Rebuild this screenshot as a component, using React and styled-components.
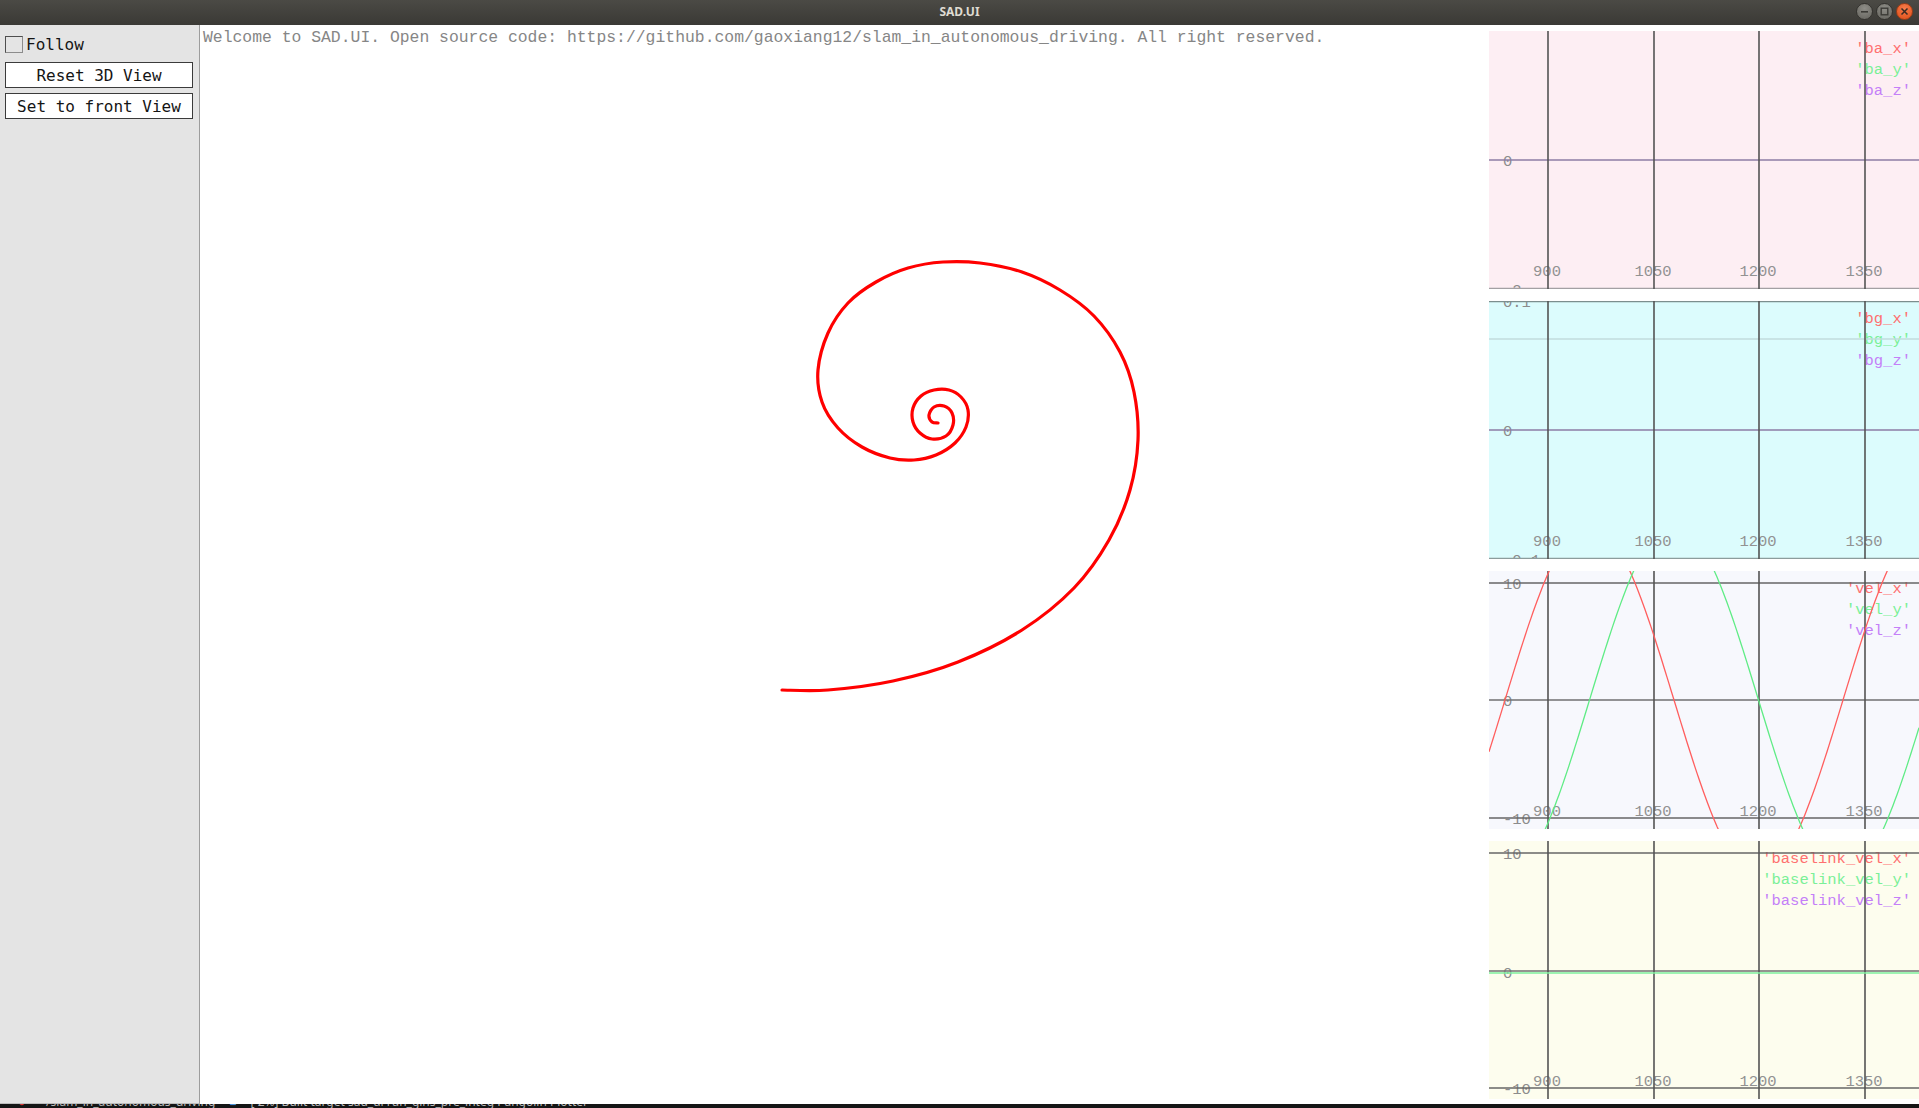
import styled, { createGlobalStyle } from "styled-components";

const MONO = `"DejaVu Sans Mono", "Liberation Mono", monospace`;
const THIN_MONO = `"Liberation Mono", "DejaVu Sans Mono", monospace`;

const GlobalStyle = createGlobalStyle`
  html, body {
    margin: 0;
    padding: 0;
    background: #161616;
    overflow: hidden;
  }
`;

const Window = styled.div`
  width: 1919px;
  height: 1108px;
  display: flex;
  flex-direction: column;
  overflow: hidden;
`;

const TitleBar = styled.div`
  flex: none;
  height: 25px;
  box-sizing: border-box;
  padding-bottom: 3px;
  display: grid;
  grid-template-columns: 1fr auto 1fr;
  align-items: center;
  background: linear-gradient(#4b4a45, #3a3935);
`;

const Title = styled.div`
  grid-column: 2;
  font-family: "Noto Sans", "DejaVu Sans", sans-serif;
  font-size: 12px;
  font-weight: 700;
  color: #dfdbd2;
`;

const WinButtons = styled.div`
  grid-column: 3;
  justify-self: end;
  display: flex;
  gap: 3px;
  padding-right: 6px;
`;

const WinButton = styled.div`
  width: 17px;
  height: 17px;
  box-sizing: border-box;
  border-radius: 50%;
  display: flex;
  align-items: center;
  justify-content: center;
  border: 1px solid ${(p) => (p.$close ? "#9c3d17" : "#34332f")};
  background: ${(p) =>
    p.$close
      ? "radial-gradient(circle at 50% 30%, #f57c4b, #e04d17)"
      : "radial-gradient(circle at 50% 30%, #8e8d87, #64635d)"};
`;

const Body = styled.div`
  flex: none;
  height: 1079px;
  display: flex;
`;

const Sidebar = styled.div`
  width: 200px;
  flex: none;
  box-sizing: border-box;
  background: #e4e4e4;
  border-right: 1px solid #9d9d9d;
  border-bottom: 1px solid #bdbdbd;
  padding: 10px 0 0 5px;
  display: flex;
  flex-direction: column;
  align-items: flex-start;
  font-family: ${MONO};
  font-size: 16px;
  color: #141414;
`;

const CheckRow = styled.label`
  height: 17px;
  display: flex;
  align-items: center;
  gap: 3px;
  line-height: 17px;
  padding-top: 1px;
`;

const CheckBox = styled.span`
  width: 18px;
  height: 17px;
  box-sizing: border-box;
  border: 1px solid #4e4e4e;
  border-right-color: #8c8c8c;
  border-bottom-color: #8c8c8c;
`;

const PanelButton = styled.div`
  margin-top: ${(p) => p.$gap}px;
  width: 188px;
  height: 26px;
  box-sizing: border-box;
  border: 1px solid #3b3b3b;
  background: #fff;
  display: flex;
  align-items: center;
  justify-content: center;
  padding-top: 1px;
  white-space: nowrap;
`;

const View = styled.div`
  flex: 1;
  position: relative;
  background: #fff;
  overflow: hidden;
`;

const Welcome = styled.div`
  position: absolute;
  top: 3px;
  left: 3px;
  font-family: ${THIN_MONO};
  font-size: 16.4px;
  line-height: 19px;
  color: #868686;
  white-space: nowrap;
`;

const Canvas = styled.svg`
  display: block;
  width: 100%;
  height: 100%;
`;

const PlotColumn = styled.div`
  width: 430px;
  flex: none;
  background: #fff;
  padding-top: 6px;
  display: flex;
  flex-direction: column;
  gap: 12px;
`;

const PlotSvg = styled.svg`
  display: block;
  width: 430px;
  height: 258px;
  flex: none;
  background: ${(p) => p.$bg};
  font-family: ${THIN_MONO};
  font-size: 15.5px;
`;

const Taskbar = styled.div`
  flex: none;
  height: 4px;
  overflow: hidden;
  background: #151515;
  display: flex;
  gap: 14px;
  padding-left: 18px;
  font-family: "Noto Sans", sans-serif;
  font-size: 12px;
  line-height: 12px;
`;

const TaskItem = styled.span`
  margin-top: -8px;
  color: ${(p) => p.$color || "#b8b8b8"};
  white-space: nowrap;
`;

// spiral trajectory traced from the reference, page coordinates (outer end -> centre)
const SPIRAL = [
  [782, 690], [828, 690], [893, 681], [958, 662], [1022, 630], [1074, 588],
  [1109, 540], [1130, 490], [1138, 440], [1134, 392], [1120, 352], [1094, 316],
  [1060, 290], [1022, 272], [980, 263], [943, 262], [908, 268], [876, 282],
  [848, 303], [828, 333], [818, 370], [822, 402], [838, 428], [862, 447],
  [890, 458], [914, 460], [936, 455], [955, 443], [966, 427], [968, 410],
  [961, 397], [949, 390], [934, 390], [921, 396], [913, 408], [913, 422],
  [920, 433], [932, 439], [946, 436], [953, 425], [952, 413], [944, 406],
  [934, 407], [929, 415], [932, 422], [938, 423],
];

const smoothPath = (pts) => {
  const f = (n) => n.toFixed(1);
  let d = `M${pts[0][0]},${pts[0][1]}`;
  for (let i = 0; i < pts.length - 1; i++) {
    const p0 = pts[i - 1] || pts[i];
    const p1 = pts[i];
    const p2 = pts[i + 1];
    const p3 = pts[i + 2] || p2;
    const c1x = p1[0] + (p2[0] - p0[0]) / 6;
    const c1y = p1[1] + (p2[1] - p0[1]) / 6;
    const c2x = p2[0] - (p3[0] - p1[0]) / 6;
    const c2y = p2[1] - (p3[1] - p1[1]) / 6;
    d += ` C${f(c1x)},${f(c1y)} ${f(c2x)},${f(c2y)} ${p2[0]},${p2[1]}`;
  }
  return d;
};

const wavePath = (fn, zero, scale) => {
  let d = "";
  for (let x = 0; x <= 430; x += 2) {
    const y = zero - scale * fn(1489 + x);
    d += `${x === 0 ? "M" : "L"}${x},${y.toFixed(1)} `;
  }
  return d;
};

const omega = (px) => (2 * Math.PI * (px - 1505)) / 338;

const X_TICKS = [
  { x: 59, label: "900" },
  { x: 165, label: "1050" },
  { x: 270, label: "1200" },
  { x: 376, label: "1350" },
];

const LEGEND_COLORS = ["#ff7070", "#7af097", "#c47ff8"];

const PLOTS = [
  {
    bg: "#fdeef3",
    legends: ["'ba_x'", "'ba_y'", "'ba_z'"],
    hlines: [
      { y: 129, color: "#8d7ca4" },
      { y: 257.5, color: "#a3a0a3" },
    ],
    ylabels: [
      { y: 129, t: "0" },
      { y: 258, t: "-2" },
    ],
    series: [],
  },
  {
    bg: "#dcfcfd",
    legends: ["'bg_x'", "'bg_y'", "'bg_z'"],
    hlines: [
      { y: 0.5, color: "#7c8e8e" },
      { y: 38, color: "#c2dcdc" },
      { y: 129, color: "#8d7ca4" },
      { y: 257.5, color: "#8c9c9c" },
    ],
    ylabels: [
      { y: 0, t: "0.1" },
      { y: 129, t: "0" },
      { y: 258, t: "-0.1" },
    ],
    series: [],
  },
  {
    bg: "#f7f8fd",
    legends: ["'vel_x'", "'vel_y'", "'vel_z'"],
    hlines: [
      { y: 12, color: "#666" },
      { y: 129, color: "#707070" },
      { y: 247, color: "#666" },
    ],
    ylabels: [
      { y: 12, t: "10" },
      { y: 129, t: "0" },
      { y: 247, t: "-10" },
    ],
    series: [
      { color: "#ff5e5e", d: wavePath((px) => 15 * Math.sin(omega(px)), 129, 11.75) },
      { color: "#5fec85", d: wavePath((px) => -15 * Math.cos(omega(px)), 129, 11.75) },
    ],
  },
  {
    bg: "#fdfdee",
    legends: ["'baselink_vel_x'", "'baselink_vel_y'", "'baselink_vel_z'"],
    hlines: [
      { y: 12, color: "#666" },
      { y: 130, color: "#707070" },
      { y: 247, color: "#666" },
    ],
    ylabels: [
      { y: 12, t: "10" },
      { y: 131, t: "0" },
      { y: 247, t: "-10" },
    ],
    series: [{ color: "#7cef9c", d: "M0,132 L430,132" }],
  },
];

const Plot = ({ bg, legends, hlines, ylabels, series }) => (
  <PlotSvg $bg={bg} viewBox="0 0 430 258">
    {ylabels.map((l) => (
      <text key={l.t} x="14" y={l.y + 5.5} fill="#8c8c8c">
        {l.t}
      </text>
    ))}
    {X_TICKS.map((t) => (
      <text key={t.label} x={t.x - 1} y="244.5" fill="#929292" textAnchor="middle">
        {t.label}
      </text>
    ))}
    {legends.map((t, i) => (
      <text key={t} x="422" y={22 + i * 21} fill={LEGEND_COLORS[i]} textAnchor="end">
        {t}
      </text>
    ))}
    {hlines.map((h) => (
      <line key={h.y} x1="0" x2="430" y1={h.y} y2={h.y} stroke={h.color} strokeWidth="1.4" />
    ))}
    {X_TICKS.map((t) => (
      <line key={t.x} x1={t.x} x2={t.x} y1="0" y2="258" stroke="#535353" strokeWidth="1.6" />
    ))}
    {series.map((s) => (
      <path key={s.color} d={s.d} fill="none" stroke={s.color} strokeWidth="1.3" />
    ))}
  </PlotSvg>
);

const App = () => {
  return (
    <Window>
      <GlobalStyle />
      <TitleBar>
        <Title>SAD.UI</Title>
        <WinButtons>
          <WinButton>
            <svg width="9" height="9" viewBox="0 0 9 9">
              <rect x="1" y="4" width="7" height="1.6" fill="#3b3a36" />
            </svg>
          </WinButton>
          <WinButton>
            <svg width="9" height="9" viewBox="0 0 9 9">
              <rect x="1.2" y="1.2" width="6.6" height="6.6" fill="none" stroke="#3b3a36" strokeWidth="1.4" />
            </svg>
          </WinButton>
          <WinButton $close>
            <svg width="9" height="9" viewBox="0 0 9 9">
              <path d="M1.5 1.5 L7.5 7.5 M7.5 1.5 L1.5 7.5" stroke="#3b2a22" strokeWidth="1.5" />
            </svg>
          </WinButton>
        </WinButtons>
      </TitleBar>

      <Body>
        <Sidebar>
          <CheckRow>
            <CheckBox />
            Follow
          </CheckRow>
          <PanelButton $gap={9}>Reset 3D View</PanelButton>
          <PanelButton $gap={5}>Set to front View</PanelButton>
        </Sidebar>

        <View>
          <Canvas viewBox="200 25 1289 1079" preserveAspectRatio="xMinYMin meet">
            <path
              d={smoothPath(SPIRAL)}
              fill="none"
              stroke="#ff0000"
              strokeWidth="3.2"
              strokeLinecap="round"
              strokeLinejoin="round"
            />
          </Canvas>
          <Welcome>
            Welcome to SAD.UI. Open source code: https://github.com/gaoxiang12/slam_in_autonomous_driving. All right reserved.
          </Welcome>
        </View>

        <PlotColumn>
          {PLOTS.map((p) => (
            <Plot key={p.legends[0]} {...p} />
          ))}
        </PlotColumn>
      </Body>

      <Taskbar>
        <TaskItem $color="#d33">●</TaskItem>
        <TaskItem>~/slam_in_autonomous_driving</TaskItem>
        <TaskItem $color="#4a8fd8">■</TaskItem>
        <TaskItem>[ 2%] Built target sad_ui  run_gins_pre_integ  Pangolin Plotter</TaskItem>
      </Taskbar>
    </Window>
  );
};

export default App;
